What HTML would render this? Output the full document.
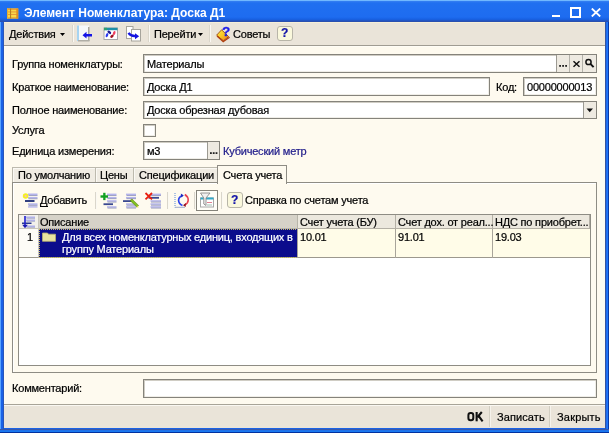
<!DOCTYPE html>
<html><head><meta charset="utf-8">
<style>
*{box-sizing:border-box;margin:0;padding:0}
html,body{width:609px;height:433px;overflow:hidden;background:#0A4FDA}
body{position:relative;font-family:"Liberation Sans",sans-serif;font-size:11px;letter-spacing:-0.2px;color:#000}
.a{position:absolute}
.t{position:absolute;white-space:nowrap;line-height:13px;height:13px;will-change:transform;-webkit-text-stroke-width:0.22px}
#win{position:absolute;left:0;top:0;width:609px;height:433px;background:#1A62E6}
#title{left:0;top:0;width:609px;height:22px;background:linear-gradient(#70B8FF 0,#70B8FF 1px,#3580F2 1px,#2070F0 3px,#1E6CF0 17px,#1862E4 19px,#1A5CD8 20px,#2A50B0 21px,#2A50B0 22px)}
#client{left:4px;top:22px;width:601px;height:406px;background:#FEFAEF}
.tb{background:#EAE4D9}
.sep{position:absolute;width:2px;background:#DAD6CB;border-right:1px solid #FAF8F2}
.fld{position:absolute;background:#fff;border:1px solid #85837B;box-shadow:inset 1px 1px 0 #D0CDC4,inset -1px -1px 0 #F0EEE8}
.btn{position:absolute;background:#EEEBE0;border-left:1px solid #D6D3C6}
</style></head><body>
<div id="win"></div>
<div class="a" style="left:0;top:0;width:1px;height:433px;background:#5AA4FF"></div>
<div class="a" style="left:3px;top:22px;width:1px;height:407px;background:#2A56B8"></div>
<div class="a" style="left:605px;top:22px;width:1px;height:407px;background:#34559E"></div>
<div class="a" style="left:606px;top:0;width:1px;height:433px;background:#1E6AF0"></div>
<div class="a" style="left:607px;top:0;width:1px;height:433px;background:#2078F8"></div>
<div class="a" style="left:608px;top:0;width:1px;height:433px;background:#0838A8"></div>
<div class="a" style="left:0;top:429px;width:609px;height:1px;background:#3858A8"></div>
<div class="a" style="left:0;top:430px;width:609px;height:1px;background:#2070E8"></div>
<div class="a" style="left:0;top:431px;width:609px;height:1px;background:#1878F0"></div>
<div class="a" style="left:0;top:432px;width:609px;height:1px;background:#0030A0"></div>
<div id="title" class="a"></div>
<!-- title icon -->
<svg class="a" style="left:0;top:0" width="24" height="22" viewBox="0 0 24 22">
 <rect x="7" y="8.5" width="11.2" height="10" fill="#F8D848"/>
 <rect x="7" y="8.5" width="11.2" height="1.5" fill="#F0A030"/>
 <rect x="7" y="11.4" width="11.2" height="1" fill="#E89838"/>
 <rect x="7" y="14" width="11.2" height="1" fill="#E89838"/>
 <rect x="7" y="17.3" width="11.2" height="1.2" fill="#E8A030"/>
 <rect x="10" y="8.5" width="1.1" height="10" fill="#B88020"/>
 <rect x="16.3" y="8.5" width="1.9" height="10" fill="#E09020"/>
 <rect x="7" y="8.5" width="1" height="10" fill="#E8B030"/>
</svg>
<div class="t" style="left:24px;top:6px;color:#fff;font-weight:bold;font-size:12px;letter-spacing:0;line-height:15px;height:15px;-webkit-text-stroke-width:0">Элемент Номенклатура: Доска Д1</div>
<!-- window buttons -->
<div class="a" style="left:552px;top:15px;width:8px;height:2px;background:#fff"></div>
<div class="a" style="left:570px;top:7px;width:11px;height:11px;border:2px solid #fff;border-top-width:2.5px"></div>
<svg class="a" style="left:591px;top:8px" width="10" height="9" viewBox="0 0 10 9"><path d="M0.8 0.5L9.2 8.5M9.2 0.5L0.8 8.5" stroke="#fff" stroke-width="1.8"/></svg>

<div id="client" class="a"></div>
<div class="a" style="left:600px;top:47px;width:5px;height:357px;background:#FCFCF4"></div>
<div class="a" style="left:4px;top:47px;width:1px;height:357px;background:#FCFCF4"></div>
<!-- toolbar -->
<div class="a tb" style="left:4px;top:22px;width:601px;height:23px"></div>
<div class="a" style="left:4px;top:22px;width:601px;height:1px;background:#F6EFD8"></div><div class="a" style="left:4px;top:45px;width:601px;height:1px;background:#A09C92"></div><div class="a" style="left:4px;top:46px;width:601px;height:1px;background:#FFFDF6"></div>
<div class="t" style="left:9px;top:28px">Действия</div>
<svg class="a" style="left:60px;top:33px" width="6" height="3"><path d="M0 0H5L2.5 3Z" fill="#000"/></svg>
<div class="sep" style="left:72px;top:25px;height:17px"></div>
<div class="sep" style="left:148px;top:25px;height:17px"></div>
<div class="t" style="left:154px;top:28px">Перейти</div>
<svg class="a" style="left:198px;top:33px" width="6" height="3"><path d="M0 0H5L2.5 3Z" fill="#000"/></svg>
<div class="sep" style="left:209px;top:25px;height:17px"></div>
<div class="t" style="left:233px;top:28px">Советы</div>
<div class="a" style="left:277px;top:26px;width:16px;height:15px;border:1px solid #B8B5A8;border-radius:3px;background:#FAF8DC"></div>
<div class="t" style="left:281px;top:27px;color:#1414A8;font-weight:bold;font-size:12px">?</div>

<!-- form labels -->
<div class="t" style="left:12px;top:58px">Группа номенклатуры:</div>
<div class="t" style="left:12px;top:81px">Краткое наименование:</div>
<div class="t" style="left:12px;top:104px">Полное наименование:</div>
<div class="t" style="left:12px;top:124px">Услуга</div>
<div class="t" style="left:12px;top:145px">Единица измерения:</div>
<div class="t" style="left:496px;top:81px">Код:</div>

<!-- fields -->
<div class="fld" style="left:143px;top:54px;width:454px;height:19px"></div>
<div class="t" style="left:147px;top:58px">Материалы</div>
<div class="fld" style="left:143px;top:77px;width:347px;height:19px"></div>
<div class="t" style="left:147px;top:81px">Доска Д1</div>
<div class="fld" style="left:523px;top:77px;width:74px;height:19px"></div>
<div class="t" style="left:527px;top:81px">00000000013</div>
<div class="fld" style="left:143px;top:101px;width:454px;height:18px"></div>
<div class="t" style="left:147px;top:104px">Доска обрезная дубовая</div>
<div class="fld" style="left:143px;top:124px;width:13px;height:13px"></div>
<div class="fld" style="left:143px;top:141px;width:77px;height:19px"></div>
<div class="t" style="left:147px;top:145px">м3</div>
<div class="t" style="left:223px;top:145px;color:#24208C">Кубический метр</div>



<!-- field buttons -->
<div class="a" style="left:556px;top:55px;width:40px;height:17px;background:#EEEAE1"></div>
<div class="a" style="left:556px;top:55px;width:1px;height:17px;background:#9C9A92"></div>
<div class="a" style="left:569px;top:55px;width:1px;height:17px;background:#B4B2AA"></div>
<div class="a" style="left:582px;top:55px;width:1px;height:17px;background:#B4B2AA"></div>
<div class="a" style="left:583px;top:102px;width:13px;height:16px;background:#EEEAE1;border-left:1px solid #9C9A92"></div>
<div class="a" style="left:207px;top:142px;width:12px;height:17px;background:#EEEAE1;border-left:1px solid #9C9A92"></div>
<svg class="a" style="left:0;top:0" width="609" height="433" viewBox="0 0 609 433">
 <rect x="559.2" y="65" width="1.8" height="1.8" fill="#222"/>
 <rect x="562.2" y="65" width="1.8" height="1.8" fill="#222"/>
 <rect x="565.2" y="65" width="1.8" height="1.8" fill="#222"/>
 <path d="M573.5 61.3L579.5 66.8M579.5 61.3L573.5 66.8" stroke="#111" stroke-width="1.5"/>
 <circle cx="588.5" cy="62" r="2.6" fill="none" stroke="#111" stroke-width="1.5"/>
 <path d="M590.4 63.9L593.6 67.1" stroke="#111" stroke-width="2"/>
 <path d="M586.5 108.5H593L589.75 112.3Z" fill="#111"/>
 <rect x="210" y="152.2" width="1.8" height="1.8" fill="#222"/>
 <rect x="212.8" y="152.2" width="1.8" height="1.8" fill="#222"/>
 <rect x="215.6" y="152.2" width="1.8" height="1.8" fill="#222"/>
</svg>

<!-- tabs -->
<div class="a" style="left:12px;top:167px;width:84px;height:16px;background:#F0ECE3;border:1px solid #BDBAAE;border-bottom:none;box-shadow:inset 1px 1px 0 #FBF9F4"></div>
<div class="a" style="left:95px;top:167px;width:39px;height:16px;background:#F0ECE3;border:1px solid #BDBAAE;border-bottom:none;box-shadow:inset 1px 1px 0 #FBF9F4"></div>
<div class="a" style="left:133px;top:167px;width:85px;height:16px;background:#F0ECE3;border:1px solid #BDBAAE;border-bottom:none;box-shadow:inset 1px 1px 0 #FBF9F4;border-right-color:#8C8A82"></div>
<div class="t" style="left:18px;top:169px">По умолчанию</div>
<div class="t" style="left:100px;top:169px">Цены</div>
<div class="t" style="left:139px;top:169px">Спецификации</div>
<!-- panel -->
<div class="a" style="left:12px;top:182px;width:585px;height:191px;border:1px solid #8E8C84;background:#FEFAEF;box-shadow:inset 1px 1px 0 #FFFFFF"></div>
<div class="a" style="left:217px;top:165px;width:70px;height:19px;border:1px solid #8E8C84;border-bottom:none;background:#FEFAEF"></div>
<div class="t" style="left:223px;top:169px">Счета учета</div>
<!-- panel toolbar -->
<div class="t" style="left:40px;top:194px">Добавить</div><div class="a" style="left:40px;top:206px;width:8px;height:1px;background:#000"></div>
<div class="sep" style="left:95px;top:192px;height:17px"></div>
<div class="sep" style="left:167px;top:192px;height:17px"></div>
<div class="sep" style="left:194px;top:192px;height:17px"></div>
<div class="a" style="left:196px;top:190px;width:22px;height:21px;border:1px solid #85837A;background:#FFFEF8"></div>
<div class="sep" style="left:221px;top:192px;height:17px"></div>
<div class="a" style="left:227px;top:192px;width:16px;height:16px;border:1px solid #B8B5A8;border-radius:3px;background:#FAF8DC"></div>
<div class="t" style="left:231px;top:194px;color:#1414A8;font-weight:bold;font-size:12px">?</div>
<div class="t" style="left:245px;top:194px">Справка по счетам учета</div>
<!-- table -->
<div class="a" style="left:18px;top:214px;width:573px;height:152px;border:1px solid #8E8C84;background:#fff"></div>
<div class="a" style="left:19px;top:215px;width:20px;height:14px;background:#F3F1EA;border-right:1px solid #C8C5BA;border-bottom:1px solid #C8C5BA"></div>
<div class="a" style="left:39px;top:215px;width:259px;height:14px;background:#D6D2C8;border-right:1px solid #B8B5AA;border-bottom:1px solid #B8B5AA"></div>
<div class="a" style="left:298px;top:215px;width:98px;height:14px;background:#ECE8DE;border-right:1px solid #B4B0A6;border-bottom:1px solid #B4B0A6"></div>
<div class="a" style="left:396px;top:215px;width:97px;height:14px;background:#ECE8DE;border-right:1px solid #B4B0A6;border-bottom:1px solid #B4B0A6"></div>
<div class="a" style="left:493px;top:215px;width:97px;height:14px;background:#ECE8DE;border-right:1px solid #B4B0A6;border-bottom:1px solid #B4B0A6"></div>
<div class="t" style="left:40px;top:216px">Описание</div>
<div class="t" style="left:300px;top:216px">Счет учета (БУ)</div>
<div class="t" style="left:398px;top:216px">Счет дох. от реал...</div>
<div class="t" style="left:495px;top:216px">НДС по приобрет...</div>
<!-- row -->
<div class="a" style="left:19px;top:229px;width:20px;height:29px;background:#FDFCF7;border-right:1px solid #C8C5BA;border-bottom:1px solid #9C988E"></div>
<div class="a" style="left:39px;top:229px;width:259px;height:29px;background:#0B0C8C;border-bottom:1px solid #9C988E;outline:1px dotted #C8C060;outline-offset:-1px"></div>
<div class="a" style="left:298px;top:229px;width:292px;height:29px;background:#FFFCE8;border-bottom:1px solid #9C988E"></div>
<div class="a" style="left:297px;top:229px;width:1px;height:29px;background:#A8A49A"></div>
<div class="a" style="left:395px;top:229px;width:1px;height:29px;background:#A8A49A"></div>
<div class="a" style="left:492px;top:229px;width:1px;height:29px;background:#A8A49A"></div>
<div class="t" style="left:27px;top:231px">1</div>
<div class="t" style="left:62px;top:231px;color:#fff">Для всех номенклатурных единиц, входящих в</div>
<div class="t" style="left:62px;top:243px;color:#fff">группу Материалы</div>
<div class="t" style="left:300px;top:231px">10.01</div>
<div class="t" style="left:398px;top:231px">91.01</div>
<div class="t" style="left:495px;top:231px">19.03</div>


<!-- icons overlay -->
<svg class="a" style="left:0;top:0" width="609" height="433" viewBox="0 0 609 433">
 <!-- toolbar icon1: page + left arrow -->
 <rect x="77" y="25.5" width="12" height="15.5" fill="#F6F8FA"/>
 <rect x="77" y="25.5" width="2" height="15.5" fill="#A6D4F2"/>
 <rect x="88" y="27" width="1.5" height="14" fill="#A8A69E"/>
 <rect x="78" y="40" width="11.5" height="1.5" fill="#B0AEA6"/>
 <path d="M82.5 35.2L86.5 31.8V34H92V36.5H86.5V38.6Z" fill="#1414E6"/>
 <!-- icon2: window with swirl -->
 <rect x="104" y="28" width="13.5" height="11.5" fill="#fff" stroke="#A8A8A8" stroke-width="1"/>
 <rect x="104" y="27.8" width="13.5" height="2.4" fill="#1E8FA8"/>
 <rect x="104" y="27.8" width="3" height="2.4" fill="#30A070"/>
 <ellipse cx="109.3" cy="32.3" rx="2.2" ry="1.3" fill="#1A1A90" transform="rotate(40 109.3 32.3)"/>
 <ellipse cx="107" cy="35.2" rx="1.2" ry="2.2" fill="#2A3AF0" transform="rotate(20 107 35.2)"/>
 <ellipse cx="114.2" cy="33" rx="1.2" ry="2.1" fill="#F04060" transform="rotate(20 114.2 33)"/>
 <ellipse cx="112" cy="36.3" rx="2" ry="1.3" fill="#A01020" transform="rotate(-40 112 36.3)"/>
 <!-- icon3: two pages + curved arrow -->
 <rect x="126.5" y="26.5" width="6.5" height="12" fill="#fff" stroke="#A6A49C" stroke-width="1"/>
 <rect x="131.5" y="29.5" width="9" height="11.5" fill="#fff" stroke="#A6A49C" stroke-width="1"/>
 <path d="M128.5 32.8Q131 36.5 135.5 36" stroke="#1414E0" stroke-width="2.4" fill="none"/>
 <path d="M135 33.2L139.2 36.2L135 39.2Z" fill="#1414E0"/>
 <!-- book with ? -->
 <defs><linearGradient id="bk" x1="0" y1="0" x2="1" y2="1"><stop offset="0" stop-color="#FFF040"/><stop offset="0.55" stop-color="#F8C020"/><stop offset="1" stop-color="#F07018"/></linearGradient></defs>
 <path d="M216.6 35.2L221.6 29.8L228.6 36.6L223.4 40.8Z" fill="url(#bk)" stroke="#9A4810" stroke-width="0.9"/>
 <path d="M217 36L223.2 41.6L229.6 37.2" stroke="#B04010" stroke-width="1.3" fill="none"/>
 <text x="222" y="35.8" font-family="Liberation Sans" font-weight="bold" font-size="13.5" fill="#1A1AE8" stroke="#1A1AE8" stroke-width="0.3">?</text>
 <!-- panel: add icon -->
 <rect x="28" y="193.5" width="9.5" height="1.6" fill="#B4B4EC"/><rect x="28.5" y="195.1" width="9" height="0.7" fill="#7A80B0"/>
 <rect x="28" y="196.9" width="9.5" height="1.6" fill="#B4B4EC"/><rect x="28.5" y="198.5" width="9" height="0.7" fill="#7A80B0"/>
 <rect x="25" y="200" width="9.5" height="2" fill="#304080"/>
 <rect x="28" y="203.3" width="9.5" height="1.6" fill="#B4B4EC"/><rect x="28.5" y="204.9" width="9" height="0.7" fill="#7A80B0"/>
 <rect x="28" y="206.2" width="9.5" height="1.4" fill="#B4B4EC"/>
 <circle cx="25.6" cy="196" r="2.8" fill="#F4F020"/>
 <circle cx="25.6" cy="196" r="1.1" fill="#F8B8C0"/>
 <!-- add row icon -->
 <rect x="107" y="193.6" width="9.5" height="1.5" fill="#B4B4EC"/>
 <rect x="107.5" y="195.1" width="9.0" height="0.7" fill="#7A80B0"/>
 <rect x="107" y="196.9" width="9.5" height="1.5" fill="#B4B4EC"/>
 <rect x="107.5" y="198.4" width="9.0" height="0.7" fill="#7A80B0"/>
 <rect x="107" y="200.2" width="9.5" height="1.5" fill="#B4B4EC"/>
 <rect x="107.5" y="201.7" width="9.0" height="0.7" fill="#7A80B0"/>
 <rect x="103.5" y="203.3" width="9.5" height="1.8" fill="#3A4890"/>
 <rect x="107" y="206.2" width="9.5" height="1.5" fill="#B4B4EC"/>
 <rect x="107.5" y="207.7" width="9.0" height="0.7" fill="#7A80B0"/>
 <rect x="100.5" y="195.3" width="7.5" height="2.4" fill="#10A020"/>
 <rect x="103.2" y="192.8" width="2.3" height="7.3" fill="#10A020"/>
 <!-- edit row icon -->
 <rect x="126" y="193.6" width="10" height="1.5" fill="#B4B4EC"/>
 <rect x="126.5" y="195.1" width="9.5" height="0.7" fill="#7A80B0"/>
 <rect x="126" y="196.9" width="10" height="1.5" fill="#B4B4EC"/>
 <rect x="126.5" y="198.4" width="9.5" height="0.7" fill="#7A80B0"/>
 <rect x="123" y="200.2" width="10" height="1.8" fill="#3A4890"/>
 <rect x="126" y="203.3" width="10" height="1.5" fill="#B4B4EC"/>
 <rect x="126.5" y="204.8" width="9.5" height="0.7" fill="#7A80B0"/>
 <rect x="126" y="206.2" width="10" height="1.5" fill="#B4B4EC"/>
 <rect x="126.5" y="207.7" width="9.5" height="0.7" fill="#7A80B0"/>
 <path d="M130 200.5L132 199L138.6 205.4L137 207.2Z" fill="#80C020" stroke="#507010" stroke-width="0.5"/>
 <path d="M136.8 205.2L138.8 207.4L137 207.2Z" fill="#F0E040"/>
 <!-- delete row icon -->
 <rect x="150.5" y="193.6" width="10.5" height="1.5" fill="#B4B4EC"/>
 <rect x="151.0" y="195.1" width="10.0" height="0.7" fill="#7A80B0"/>
 <rect x="148.5" y="196.9" width="10.5" height="1.8" fill="#3A4890"/>
 <rect x="150.5" y="200.2" width="10.5" height="1.5" fill="#B4B4EC"/>
 <rect x="151.0" y="201.7" width="10.0" height="0.7" fill="#7A80B0"/>
 <rect x="150.5" y="203.3" width="10.5" height="1.5" fill="#B4B4EC"/>
 <rect x="151.0" y="204.8" width="10.0" height="0.7" fill="#7A80B0"/>
 <rect x="150.5" y="206.2" width="10.5" height="1.5" fill="#B4B4EC"/>
 <rect x="151.0" y="207.7" width="10.0" height="0.7" fill="#7A80B0"/>
 <path d="M145.5 193L152 199.3M152 193L145.5 199.3" stroke="#E82010" stroke-width="1.8"/>
 <!-- refresh icon -->
 <path d="M175 193V207.5" stroke="#5A8AD8" stroke-width="1" stroke-dasharray="1 1" fill="none"/>
 <path d="M175 207.3H185" stroke="#8898C0" stroke-width="0.8" fill="none"/>
 <path d="M182.5 195.5Q178.5 197 178.6 200.5Q178.8 204 182.5 205.5" stroke="#2A40E8" stroke-width="1.7" fill="none"/>
 <path d="M184.8 194.5Q188.3 196.8 188.2 200.2Q188 203.5 184.5 205" stroke="#E84050" stroke-width="1.6" fill="none"/>
 <path d="M180.8 193.6L183.8 195.6L181.2 197.6Z" fill="#1A2AC0"/>
 <path d="M186 203L183 205.2L185.6 207Z" fill="#901020"/>
 <!-- filter icon -->
 <rect x="200.5" y="198" width="13" height="9" fill="#fff" stroke="#A8A8A8" stroke-width="1"/>
 <rect x="200.5" y="197.5" width="13" height="2" fill="#30A8C8"/>
 <rect x="207" y="202" width="5" height="1" fill="#E08090"/>
 <rect x="207" y="204.5" width="5" height="1" fill="#A0C0B0"/>
 <path d="M200.5 193H210L206 198V205.5L203.8 204V198Z" fill="#F0F0F0" stroke="#8A8A8A" stroke-width="0.9"/>
 <!-- header sort icon -->
 <rect x="26" y="216.5" width="9" height="1.4" fill="#B0B0EC"/><rect x="26.5" y="217.9" width="8.5" height="0.6" fill="#8088B8"/>
 <rect x="26" y="219.5" width="9" height="1.4" fill="#B0B0EC"/><rect x="26.5" y="220.9" width="8.5" height="0.6" fill="#8088B8"/>
 <rect x="22" y="222.5" width="9.5" height="1.5" fill="#2A3A90"/>
 <rect x="26" y="225.5" width="9" height="1.4" fill="#B0B0EC"/><rect x="26.5" y="226.9" width="8.5" height="0.6" fill="#8088B8"/>
 <rect x="24.2" y="216" width="1.6" height="9" fill="#2020D0"/>
 <path d="M22.2 224.8H27.8L25 228.2Z" fill="#1A1AB0"/>
 <!-- folder icon -->
 <path d="M42.5 233H47.5L48.5 234.2H55.5V241.3H42.5Z" fill="#E8E2A0" stroke="#B8B070" stroke-width="0.8"/>
</svg>

<!-- bottom bar -->
<div class="a tb" style="left:4px;top:405px;width:601px;height:23px"></div>
<div class="a" style="left:4px;top:404px;width:601px;height:1px;background:#A8A498"></div><div class="a" style="left:4px;top:405px;width:601px;height:1px;background:#FAF8F2"></div>
<svg class="a" style="left:460px;top:406px" width="30" height="22" viewBox="0 0 30 22">
 <rect x="8.4" y="7" width="4.9" height="7.3" rx="2.2" fill="none" stroke="#111" stroke-width="2"/>
 <rect x="15.6" y="6" width="2.1" height="9.3" fill="#111"/>
 <path d="M17.4 11.2L21.8 6M18.6 9.8L22.6 15.3" stroke="#111" stroke-width="2.1" fill="none"/>
</svg>
<div class="a" style="left:489px;top:406px;width:1px;height:21px;background:#D2CEC2"></div><div class="a" style="left:490px;top:406px;width:1px;height:21px;background:#F6F3EC"></div>
<div class="t" style="left:497px;top:411px;letter-spacing:0.1px">Записать</div>
<div class="a" style="left:549px;top:406px;width:1px;height:21px;background:#D2CEC2"></div><div class="a" style="left:550px;top:406px;width:1px;height:21px;background:#F6F3EC"></div>
<div class="t" style="left:557px;top:411px;letter-spacing:0.2px">Закрыть</div>

<div class="t" style="left:12px;top:382px">Комментарий:</div>
<div class="fld" style="left:143px;top:379px;width:454px;height:19px"></div>
</body></html>
